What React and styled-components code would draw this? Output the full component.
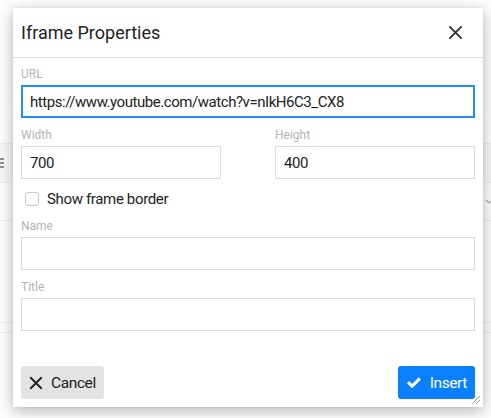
import React from 'react';
import styled, { createGlobalStyle } from 'styled-components';

const GlobalStyle = createGlobalStyle`
  html, body {
    margin: 0;
    padding: 0;
    height: 100%;
    background: #fff;
    font-family: Roboto, "Liberation Sans", sans-serif;
    color: #222;
  }
  #root {
    height: 100%;
  }
`;

/* editor page that sits behind the modal */
const Page = styled.div`
  position: relative;
  height: 418px;
  overflow: hidden;
  background: #fcfcfc;
`;

const PageTop = styled.div`
  height: 143px;
  border-bottom: 1px solid #e4e4e4;
`;

const Toolbar = styled.div`
  height: 38px;
  display: flex;
  align-items: center;
  justify-content: space-between;
  background: #f3f3f3;
  border-bottom: 1px solid #e4e4e4;
  color: #555;
`;

const ToolRow = styled.div`
  height: 37px;
  display: flex;
  align-items: center;
  justify-content: flex-end;
  border-bottom: 1px solid #e4e4e4;
  color: #999;
`;

const PageGap = styled.div`
  height: ${(p) => p.h}px;
  border-bottom: 1px solid #e4e4e4;
`;

const Backdrop = styled.div`
  position: absolute;
  inset: 0;
  display: flex;
  align-items: flex-start;
  padding: 8px 0 0 13px;
  background: rgba(255, 255, 255, 0.35);
`;

const Dialog = styled.div`
  width: 470px;
  height: 399px;
  display: flex;
  flex-direction: column;
  background: #fff;
  box-shadow: 0 4px 14px rgba(0, 0, 0, 0.28), 0 0 3px rgba(0, 0, 0, 0.08);
  position: relative;
`;

const Header = styled.div`
  height: 49px;
  display: flex;
  align-items: center;
  justify-content: space-between;
  padding: 0 20px 0 8px;
  border-bottom: 1px solid #dcdcdc;
`;

const Title = styled.h1`
  margin: 0;
  font-size: 18px;
  font-weight: 400;
  color: #222;
`;

const IconButton = styled.button`
  border: 0;
  background: none;
  padding: 0;
  display: flex;
  cursor: pointer;
  color: #333;
`;

const Body = styled.div`
  flex: 1;
  padding: 8px 8px 0;
  display: flex;
  flex-direction: column;
  gap: 9px;
`;

const Field = styled.label`
  display: flex;
  flex-direction: column;
  gap: 3px;
  flex: ${(p) => (p.half ? 1 : 'none')};
`;

const Label = styled.span`
  font-size: 12px;
  line-height: 16px;
  color: #b3b3b3;
`;

const Input = styled.input`
  box-sizing: border-box;
  height: 33px;
  width: 100%;
  padding: 0 8px;
  font: inherit;
  font-size: 15px;
  letter-spacing: -0.45px;
  color: #222;
  background: #fff;
  border: 1px solid ${(p) => (p.focused ? '#1f8cf7' : '#dcdcdc')};
  box-shadow: ${(p) => (p.focused ? 'inset 0 0 0 1px #1f8cf7' : 'none')};
  outline: none;
`;

const Row = styled.div`
  display: flex;
  gap: 54px;
`;

const CheckRow = styled.label`
  height: 20px;
  margin-top: 1px;
  display: flex;
  align-items: center;
  gap: 8px;
  padding-left: 4px;
  font-size: 15px;
  letter-spacing: -0.35px;
  color: #222;
`;

const Box = styled.span`
  box-sizing: border-box;
  width: 14px;
  height: 14px;
  border: 1px solid #c8c8c8;
  border-radius: 3px;
  background: #fff;
`;

const Footer = styled.div`
  display: flex;
  justify-content: space-between;
  padding: 8px;
`;

const Button = styled.button`
  height: 33px;
  display: flex;
  align-items: center;
  gap: 8px;
  padding: 0 8px;
  border: 0;
  border-radius: 3px;
  font: inherit;
  font-size: 15.5px;
  letter-spacing: -0.4px;
  cursor: pointer;
  background: ${(p) => (p.primary ? '#0a80ff' : '#e3e3e3')};
  color: ${(p) => (p.primary ? '#fff' : '#222')};
`;

const Grip = styled.svg`
  position: absolute;
  right: 2px;
  bottom: 2px;
`;

const CloseIcon = ({ size = 15, width = 2 }) => (
  <svg width={size} height={size} viewBox="0 0 16 16" fill="none" stroke="currentColor" strokeWidth={width} strokeLinecap="round">
    <path d="M2 2l12 12M14 2L2 14" />
  </svg>
);

const CheckIcon = () => (
  <svg width="16" height="13" viewBox="0 0 16 13" fill="currentColor">
    <path d="M1 7.2l2.2-2.2 2.9 2.9L12.8 1.2 15 3.4 6.1 12.3z" />
  </svg>
);

const App = () => {
  return (
    <>
      <GlobalStyle />
      <Page>
        <PageTop />
        <Toolbar>
          <svg width="8" height="10" viewBox="0 0 8 10" fill="#555" style={{ marginLeft: -4 }}>
            <rect x="0" y="0" width="8" height="2" />
            <rect x="0" y="4" width="8" height="2" />
            <rect x="0" y="8" width="8" height="2" />
          </svg>
        </Toolbar>
        <ToolRow>
          <svg width="8" height="6" viewBox="0 0 8 6" fill="none" stroke="#888" strokeWidth="1.2" style={{ marginRight: -2 }}>
            <path d="M1 1l3 3 3-3" />
          </svg>
        </ToolRow>
        <PageGap h={101} />
        <PageGap h={9} />

        <Backdrop>
          <Dialog>
            <Header>
              <Title>Iframe Properties</Title>
              <IconButton aria-label="Close">
                <CloseIcon />
              </IconButton>
            </Header>
            <Body>
              <Field>
                <Label>URL</Label>
                <Input focused defaultValue="https://www.youtube.com/watch?v=nIkH6C3_CX8" />
              </Field>
              <Row>
                <Field half>
                  <Label>Width</Label>
                  <Input defaultValue="700" />
                </Field>
                <Field half>
                  <Label>Height</Label>
                  <Input defaultValue="400" />
                </Field>
              </Row>
              <CheckRow>
                <Box />
                Show frame border
              </CheckRow>
              <Field>
                <Label>Name</Label>
                <Input />
              </Field>
              <Field>
                <Label>Title</Label>
                <Input />
              </Field>
            </Body>
            <Footer>
              <Button>
                <CloseIcon size={14} width={2.2} />
                Cancel
              </Button>
              <Button primary>
                <CheckIcon />
                Insert
              </Button>
            </Footer>
            <Grip width="10" height="10" viewBox="0 0 10 10" stroke="#999" strokeWidth="1">
              <path d="M9 1L1 9M9 5L5 9" />
            </Grip>
          </Dialog>
        </Backdrop>
      </Page>
    </>
  );
};

export default App;
